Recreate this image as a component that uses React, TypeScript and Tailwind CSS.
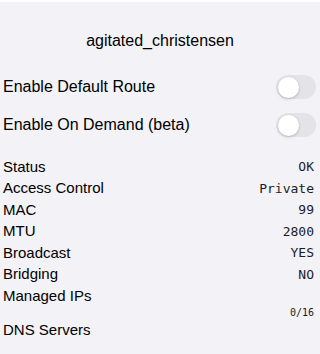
const INFO: [string, string][] = [
  ["Status", "OK"],
  ["Access Control", "Private"],
  ["MAC", "99"],
  ["MTU", "2800"],
  ["Broadcast", "YES"],
  ["Bridging", "NO"],
];

function Toggle() {
  return (
    <div className="flex h-[24px] w-[40px] items-center rounded-full bg-[#e3e3e8] p-[1.5px]">
      <div className="h-[21px] w-[21px] rounded-full bg-white shadow-[0_1px_3px_rgba(0,0,0,0.22)]" />
    </div>
  );
}

export default function App() {
  return (
    <div className="flex h-[354px] w-[320px] flex-col overflow-hidden bg-white font-['Liberation_Sans',Arial,sans-serif] text-black">
      <div className="mt-[2px] flex flex-1 flex-col bg-[#f2f2f7]">
        {/* Title */}
        <div className="mt-[29px] h-[20px] text-center text-[16px] leading-[20px]">agitated_christensen</div>

        {/* Toggles */}
        <div className="mt-[17px] flex flex-col">
          <div className="flex h-[38px] items-center justify-between pr-[4px] pl-[3px] text-[16px]">
            <span>Enable Default Route</span>
            <Toggle />
          </div>
          <div className="flex h-[38px] items-center justify-between pr-[4px] pl-[3px] text-[16px]">
            <span>Enable On Demand (beta)</span>
            <Toggle />
          </div>
        </div>

        {/* Info */}
        <div className="mt-[12px] flex flex-col pr-[6px] pl-[3px]">
          {INFO.map(([k, v]) => (
            <div key={k} className="flex h-[21.5px] items-center justify-between">
              <span className="text-[15px]">{k}</span>
              <span className="font-['DejaVu_Sans_Mono',monospace] text-[13px] text-[#1c1c1e]">{v}</span>
            </div>
          ))}
          <div className="flex h-[21.5px] items-center text-[15px]">Managed IPs</div>
          <div className="flex h-[12px] items-center justify-end font-['DejaVu_Sans_Mono',monospace] text-[10px] text-[#1c1c1e]">
            0/16
          </div>
          <div className="flex h-[23px] items-center text-[15px]">DNS Servers</div>
        </div>
      </div>
    </div>
  );
}
